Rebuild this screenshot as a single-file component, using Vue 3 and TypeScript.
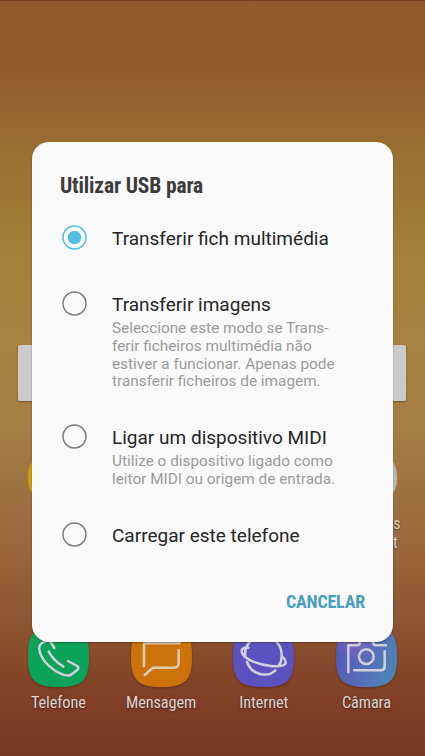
<script setup lang="ts">
import { ref } from 'vue'

interface UsbOption {
  id: string
  label: string
  lines: string[]
}

const selected = ref('media')

const options: UsbOption[] = [
  { id: 'media', label: 'Transferir fich multimédia', lines: [] },
  {
    id: 'images',
    label: 'Transferir imagens',
    lines: [
      'Seleccione este modo se Trans-',
      'ferir ficheiros multimédia não',
      'estiver a funcionar. Apenas pode',
      'transferir ficheiros de imagem.',
    ],
  },
  {
    id: 'midi',
    label: 'Ligar um dispositivo MIDI',
    lines: ['Utilize o dispositivo ligado como', 'leitor MIDI ou origem de entrada.'],
  },
  { id: 'charge', label: 'Carregar este telefone', lines: [] },
]
</script>

<template>
  <div class="screen">
    <div class="status-edge"></div>
    <div class="search"></div>
    <div class="apps upper">
      <div class="app"><span class="tile yellow"></span></div>
      <div class="app">
        <span class="tile pale"></span>
        <span class="tail"><span>s</span><span class="second">t</span></span>
      </div>
    </div>
    <div class="apps dock">
      <div class="app">
        <svg class="icon" viewBox="84 18 183 183">
          <path class="shape green" d="M175.500 18C249 18 267 40 267 109.500S249 201 175.500 201 84 179 84 109.500 102 18 175.500 18Z" />
          <path class="line" d="M163 84L151 65Q146 59 139 62L126 69C108 80 121 112 146 137C171 160 199 171 212 165L232 150Q238 143 232 138L204 123M146 95Q161 122 190 140" />
        </svg>
        <span class="name">Telefone</span>
      </div>
      <div class="app">
        <svg class="icon" viewBox="393 18 183 183">
          <path class="shape orange" d="M484.500 18C558 18 576 40 576 109.500S558 201 484.500 201 393 179 393 109.500 411 18 484.500 18Z" />
          <path class="line cream" d="M539 70H432V139M536 90V128Q536 143 521 143H459L434 165" />
        </svg>
        <span class="name">Mensagem</span>
      </div>
      <div class="app">
        <svg class="icon" viewBox="70 18 183 183">
          <path class="shape violet" d="M161.500 18C235 18 253 40 253 109.500S235 201 161.500 201 70 179 70 109.500 88 18 161.500 18Z" />
          <path class="line" d="M107 107C103 76 126 51 161 51S217 76 216 108C216 119 214 128 208 136M116 83C98 81 92 90 99 102C109 119 145 134 184 138C213 141 230 136 228 125Q227 117 216 108M112 126C125 165 174 174 197 151" />
        </svg>
        <span class="name">Internet</span>
      </div>
      <div class="app">
        <svg class="icon" viewBox="378 18 183 183">
          <defs>
            <linearGradient id="lens" x1="0" y1="0.300" x2="1" y2="0.700">
              <stop offset="0" stop-color="#4c58b8" />
              <stop offset="0.420" stop-color="#5967b9" />
              <stop offset="1" stop-color="#4c86b9" />
            </linearGradient>
            <radialGradient id="glow" cx="0.300" cy="0.180" r="0.420">
              <stop offset="0" stop-color="#8468bd" />
              <stop offset="1" stop-color="#8468bd" stop-opacity="0" />
            </radialGradient>
          </defs>
          <path fill="url(#lens)" d="M469.500 18C543 18 561 40 561 109.500S543 201 469.500 201 378 179 378 109.500 396 18 469.500 18Z" />
          <path fill="url(#glow)" d="M469.500 18C543 18 561 40 561 109.500S543 201 469.500 201 378 179 378 109.500 396 18 469.500 18Z" />
          <path class="line" d="M415 156V76H440Q450 76 450 66V58H489V66Q489 76 500 76H528M524 94V139Q524 151 512 151H432" />
          <circle class="line" cx="469" cy="110" r="22" />
        </svg>
        <span class="name">Câmara</span>
      </div>
    </div>

    <section class="dialog" role="dialog">
      <h1 class="title">Utilizar USB para</h1>
      <div class="options" role="radiogroup">
        <div
          v-for="option in options"
          :key="option.id"
          class="option"
          role="radio"
          :aria-checked="selected === option.id"
          @click="selected = option.id"
        >
          <svg class="radio" :class="{ on: selected === option.id }" viewBox="0 0 25 25">
            <circle class="ring" cx="12.500" cy="12.500" r="11.500" />
            <circle v-if="selected === option.id" class="dot" cx="12.500" cy="12.500" r="6.800" />
          </svg>
          <div class="text">
            <div class="label">{{ option.label }}</div>
            <div v-if="option.lines.length" class="description">
              <div v-for="line in option.lines" :key="line">{{ line }}</div>
            </div>
          </div>
        </div>
      </div>
      <button class="cancel" type="button">CANCELAR</button>
    </section>
  </div>
</template>

<style>
body {
  margin: 0;
}
</style>

<style scoped>
.screen {
  position: relative;
  box-sizing: border-box;
  width: 425px;
  height: 756px;
  overflow: hidden;
  font-family: Roboto, 'Liberation Sans', sans-serif;
  background: linear-gradient(
    #8f592e 0, #8f5c2e 60px, #94662f 110px, #996e31 145px, #a37f39 245px,
    #a68140 340px, #a57e43 430px, #9d7040 500px, #97643b 560px,
    #8a502d 640px, #803f26 700px, #7a3823 756px
  );
}
.status-edge {
  height: 1px;
  background: #704120;
}
.search {
  height: 56px;
  margin: 344px 19px 0 18px;
  border-radius: 2px;
  background: #cbcbcb;
  box-shadow: 0 1px 2px rgba(50, 30, 0, 0.45);
}
.apps {
  display: flex;
  padding: 0 7px;
}
.upper {
  justify-content: space-between;
  height: 225px;
  padding-top: 46px;
  box-sizing: border-box;
}
.app {
  display: flex;
  flex-direction: column;
  align-items: center;
  width: 102.700px;
}
.tile {
  width: 61px;
  height: 61px;
  flex: none;
  border-radius: 29px;
}
.yellow {
  background: #cfa20a;
}
.pale {
  background: #b9bbbb;
}
.tail {
  display: flex;
  flex-direction: column;
  align-items: flex-end;
  width: 68px;
  margin-top: 6px;
  font-family: 'Roboto Condensed', Roboto, sans-serif;
  font-size: 16px;
  line-height: 19px;
  font-stretch: 75%;
  color: #d5cdc4;
  text-shadow: 0 1px 2px rgba(0, 0, 0, 0.4);
}
.second {
  margin-right: 3px;
}
.icon {
  width: 61px;
  height: 61px;
  filter: drop-shadow(0 1px 1px rgba(40, 15, 0, 0.35));
}
.green {
  fill: #0ba35a;
}
.orange {
  fill: #cb730a;
}
.violet {
  fill: #5b52bf;
}
.line {
  fill: none;
  stroke: #d0d0dc;
  stroke-width: 7.500;
  stroke-linecap: round;
  stroke-linejoin: round;
}
.cream {
  stroke: #dccbb4;
}
.name {
  margin-top: 6px;
  font-family: 'Roboto Condensed', Roboto, sans-serif;
  font-size: 16.300px;
  line-height: 20px;
  font-stretch: 75%;
  letter-spacing: -0.100px;
  color: #dcd3cf;
  text-shadow: 0 1px 2px rgba(0, 0, 0, 0.45);
}
.dialog {
  position: absolute;
  left: 32px;
  top: 142px;
  box-sizing: border-box;
  display: flex;
  flex-direction: column;
  width: 361px;
  height: 500px;
  padding: 32px 28px 27px;
  border-radius: 17px;
  background: #fafafa;
  box-shadow: 0 1px 2px rgba(40, 20, 0, 0.4);
}
.title {
  margin: 0 0 30px;
  font-family: 'Roboto Condensed', Roboto, sans-serif;
  font-size: 21.500px;
  line-height: 24px;
  font-weight: 700;
  font-stretch: 75%;
  letter-spacing: -0.150px;
  color: #3c3c3c;
}
.option {
  display: flex;
  box-sizing: border-box;
  min-height: 66px;
  padding-bottom: 36px;
  gap: 25.200px;
}
.option:last-child {
  min-height: 0;
  padding-bottom: 0;
}
.radio {
  flex: none;
  width: 25px;
  height: 25px;
  margin: -2.600px 0 0 1.800px;
}
.ring {
  fill: none;
  stroke: #7d7d7d;
  stroke-width: 1.500;
}
.on .ring {
  stroke: #55bde2;
}
.dot {
  fill: #55bde2;
}
.label {
  font-size: 19.030px;
  line-height: 22px;
  white-space: nowrap;
  color: #262626;
}
.description {
  margin-top: 4px;
  font-size: 15.350px;
  line-height: 17.750px;
  white-space: nowrap;
  color: #9b9b9b;
}
.cancel {
  align-self: flex-end;
  margin: auto 0 0;
  padding: 0;
  border: 0;
  background: none;
  font-family: 'Roboto Condensed', Roboto, sans-serif;
  font-size: 18px;
  line-height: 26px;
  font-weight: 700;
  font-stretch: 75%;
  letter-spacing: -0.200px;
  color: #4a9fbd;
}
</style>
